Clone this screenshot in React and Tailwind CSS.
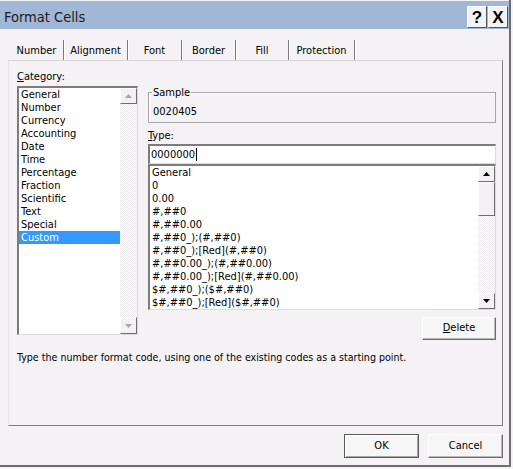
export default function App() {
  const categories = ["General", "Number", "Currency", "Accounting", "Date", "Time", "Percentage", "Fraction", "Scientific", "Text", "Special", "Custom"];
  const formats = [
    "General",
    "0",
    "0.00",
    "#,##0",
    "#,##0.00",
    "#,##0_);(#,##0)",
    "#,##0_);[Red](#,##0)",
    "#,##0.00_);(#,##0.00)",
    "#,##0.00_);[Red](#,##0.00)",
    "$#,##0_);($#,##0)",
    "$#,##0_);[Red]($#,##0)",
  ];
  const tabs = [
    ["Number", "w-[54px]"],
    ["Alignment", "w-[64px]"],
    ["Font", "w-[54px]"],
    ["Border", "w-[54px]"],
    ["Fill", "w-[53px]"],
    ["Protection", "w-[66px]"],
  ];

  return (
    <div className="w-[513px] h-[469px] bg-[#f5f2f5] font-['DejaVu_Sans_Condensed','Liberation_Sans',sans-serif] text-[11px] text-black">
      <div className="flex flex-col w-[511px] h-[467px] border-r-2 border-b-2 border-[#6e6e6e]">
        {/* Title bar */}
        <div className="mt-[1px] h-[28px] bg-[#a0b7d6] flex items-center justify-between pl-[4px] pr-[1px] pt-[4px]">
          <span className="text-[14.5px] text-[#1b1b1b] leading-none">Format Cells</span>
          <div className="flex gap-[1px]">
            <TitleButton>?</TitleButton>
            <TitleButton>X</TitleButton>
          </div>
        </div>

        {/* Tabs */}
        <div className="mt-[11px] h-[20px] flex pl-[10px]">
          {tabs.map(([t, w]) => (
            <div key={t} className={`${w} h-full flex items-center justify-center pt-[3px] border-r border-[#7a7a7a] shadow-[1px_0_0_#ffffff]`}>
              {t}
            </div>
          ))}
        </div>

        {/* Tab panel */}
        <div className="ml-[8px] w-[495px] h-[366px] border border-t-[#d8d6d8] border-l-[#e6e4e6] border-r-[#7d7d7d] border-b-[#7d7d7d] pl-[8px] pt-[9px]">
          <div className="flex gap-[10px]">
            {/* Category */}
            <div className="w-[121px] flex flex-col">
              <div className="h-[13px] leading-[13px]"><u>C</u>ategory:</div>
              <div className="mt-[3px] h-[249px] flex border-2 border-t-[#7c7c7c] border-l-[#7c7c7c] border-r-[#dcdcdc] border-b-[#dcdcdc] border-r-[1px] border-b-[1px] bg-white">
                <div className="flex-1 flex flex-col">
                  {categories.map((c) => (
                    <div key={c} className={`h-[13px] leading-[13px] pl-[2px] ${c === "Custom" ? "bg-[#3399ff] text-white" : ""}`}>{c}</div>
                  ))}
                </div>
                <div className="w-[17px] flex flex-col bg-[#f6f4f6]">
                  <ScrollBtn dir="up" disabled h="h-[16px]" />
                  <div className="flex-1 bg-[repeating-conic-gradient(#ffffff_0_25%,#ece9ec_0_50%)] bg-[length:2px_2px]" />
                  <ScrollBtn dir="down" disabled h="h-[17px]" />
                </div>
              </div>
            </div>

            {/* Right column */}
            <div className="w-[348px] flex flex-col">
              <div className="relative mt-[22px] h-[31px] border border-[#a6a6a6] shadow-[inset_1px_1px_0_#ffffff] pl-[4px] pt-[12px]">
                <span className="absolute -top-[7px] left-[3px] px-[1px] bg-[#f5f2f5] leading-[13px]">Sample</span>
                <div className="leading-[13px]">0020405</div>
              </div>

              <div className="mt-[6px] h-[13px] leading-[13px]"><u>T</u>ype:</div>

              <div className="mt-[2px] h-[20px] flex items-center bg-white border-2 border-t-[#7c7c7c] border-l-[#7c7c7c] border-r-[#dcdcdc] border-b-[#dcdcdc] border-r-[1px] border-b-[1px] pl-[1px]">
                <span className="leading-[13px] border-r border-black pr-[1px]">0000000</span>
              </div>

              <div className="h-[146px] flex bg-white border-2 border-t-[#7c7c7c] border-l-[#7c7c7c] border-r-[#dcdcdc] border-b-[#dcdcdc] border-r-[1px] border-b-[1px]">
                <div className="flex-1 flex flex-col pl-[2px] overflow-hidden">
                  {formats.map((f) => (
                    <div key={f} className="h-[13px] leading-[13px] whitespace-nowrap">{f}</div>
                  ))}
                </div>
                <div className="w-[17px] flex flex-col bg-[repeating-conic-gradient(#ffffff_0_25%,#eeebee_0_50%)] bg-[length:2px_2px]">
                  <ScrollBtn dir="up" h="h-[16px]" />
                  <div className="h-[34px] bg-[#f3f1f3] border border-t-white border-l-white border-r-[#6f6f6f] border-b-[#6f6f6f]" />
                  <div className="flex-1" />
                  <ScrollBtn dir="down" h="h-[16px]" />
                </div>
              </div>

              <button className="self-end mt-[7px] w-[74px] h-[23px] bg-[#f7f6f7] border border-t-white border-l-white border-r-[#6e6e6e] border-b-[#6e6e6e] shadow-[inset_-1px_-1px_0_#b8b8b8] flex items-center justify-center">
                <span><u>D</u>elete</span>
              </button>
            </div>
          </div>

          <div className="mt-[11px] h-[13px] leading-[13px] text-[10.6px]">
            Type the number format code, using one of the existing codes as a starting point.
          </div>
        </div>

        {/* Bottom buttons */}
        <div className="mt-[8px] flex justify-end gap-[9px] pr-[6px]">
          <button className="w-[75px] h-[24px] bg-[#f7f6f7] border border-[#5a5a5a] shadow-[inset_1px_1px_0_#ffffff,inset_-1px_-1px_0_#a8a8a8] flex items-center justify-center">OK</button>
          <button className="w-[75px] h-[24px] bg-[#f7f6f7] border border-t-white border-l-white border-r-[#6e6e6e] border-b-[#6e6e6e] shadow-[inset_-1px_-1px_0_#b8b8b8] flex items-center justify-center">Cancel</button>
        </div>
      </div>
    </div>
  );
}

function TitleButton({ children }) {
  return (
    <div className="w-[20px] h-[22px] bg-[#f4f3f4] border border-t-white border-l-white border-r-[#555555] border-b-[#555555] flex items-center justify-center text-[17px] font-bold leading-none text-black font-['Liberation_Sans',sans-serif]">
      {children}
    </div>
  );
}

function ScrollBtn({ dir, disabled, h }) {
  const fill = disabled ? "#a7a7a7" : "#000000";
  return (
    <div className={`${h} w-full bg-[#f3f1f3] border border-t-white border-l-white border-r-[#6f6f6f] border-b-[#6f6f6f] flex items-center justify-center`}>
      <svg width="7" height="4" viewBox="0 0 7 4">
        {dir === "up" ? (
          <polygon points="3.5,0 7,4 0,4" fill={fill} />
        ) : (
          <polygon points="0,0 7,0 3.5,4" fill={fill} />
        )}
      </svg>
    </div>
  );
}
